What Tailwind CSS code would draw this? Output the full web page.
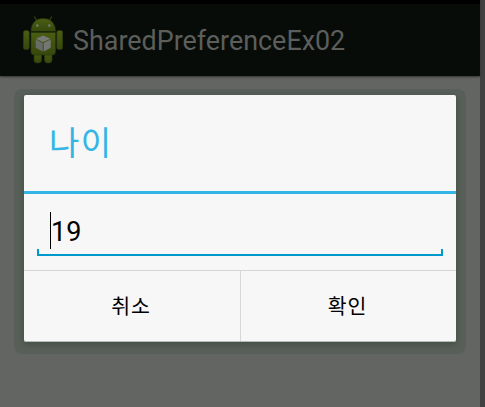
<!DOCTYPE html>
<html lang="ko">

<head>
  <meta charset="UTF-8">
  <title>SharedPreferenceEx02</title>
  <script src="https://cdn.jsdelivr.net/npm/@tailwindcss/browser@4"></script>
</head>

<body class="h-[407px] w-[485px] overflow-hidden bg-[#424242] font-['Roboto','Noto_Sans_CJK_KR',sans-serif]">
  <div class="flex h-full w-[480px] flex-col bg-[#636562]">
    <!-- Action bar -->
    <header class="flex h-[76px] shrink-0 items-center border-t-4 border-black bg-[#070c08] pl-[23px] shadow-[0_1px_2px_#333]">
      <svg class="h-[48px] w-[40px] shrink-0" viewBox="0 0 40 48">
        <defs>
          <linearGradient id="body" x1="0" y1="0" x2="0" y2="1">
            <stop offset="0" stop-color="#4b5e13" />
            <stop offset="1" stop-color="#37480d" />
          </linearGradient>
        </defs>
        <g stroke="#35450e" stroke-width="1.2" stroke-linecap="round">
          <path d="M11.5 1l3 4.500M28.500 1l-3 4.500" />
        </g>
        <g fill="url(#body)" stroke="#2a370b" stroke-width=".6">
          <rect x="11" y="35" width="7.500" height="12" rx="3" />
          <rect x="21.500" y="35" width="7.500" height="12" rx="3" />
          <rect x=".3" y="14.500" width="6" height="19" rx="2" />
          <rect x="33.700" y="14.500" width="6" height="19" rx="2" />
          <path d="M8 15.500h24.500v20q0 3.500-3.500 3.500H11.500Q8 39 8 35.500z" />
          <path d="M8 15.500C8 7 13 2.500 20.200 2.500S32.500 7 32.500 15.500z" />
        </g>
        <path d="M7.800 16h25" stroke="#141c07" stroke-width="1.200" />
        <circle cx="14.300" cy="9.500" r="1.300" fill="#747970" />
        <circle cx="26.300" cy="9.500" r="1.300" fill="#747970" />
        <path d="M20.200 19.500l7.200 3.300-7.200 3.400-7.200-3.400z" fill="#767976" />
        <path d="M12.700 23.600l7 3.300v8.500l-7-3.600z" fill="#696c69" />
        <path d="M27.700 23.600l-7 3.300v8.500l7-3.600z" fill="#747774" />
      </svg>
      <h1 class="ml-[10px] pt-[2px] text-[26.900px] leading-8 text-[#5c5e5c]">SharedPreferenceEx02</h1>
    </header>

    <main class="pt-[13px] pl-[14px]">
      <!-- Dialog with its dark halo -->
      <div class="h-[265px] w-[452px] rounded-lg bg-[#59605a] px-[10px] pt-[6px]">
        <div class="flex h-[247px] flex-col rounded-[2px] border-b border-[#b8bab8] bg-[#f7f7f7] shadow-[0_2px_7px_1px_#465045]">
          <div class="flex h-[99px] shrink-0 items-center border-b-3 border-[#33b5e5] pl-[25px]">
            <h2 class="text-[33px] leading-none tracking-[1.500px] text-[#33b5e5]">나이</h2>
          </div>
          <div class="h-[76px] shrink-0 px-[13px] pt-[18px]">
            <div class="flex h-[37px] items-center pl-[13px]">
              <span class="h-[37px] w-px bg-black"></span>
              <span class="pt-[3px] text-[27px] leading-none text-black">19</span>
            </div>
            <div class="h-[7px] border-x-2 border-b-2 border-[#0099cc]"></div>
          </div>
          <div class="flex flex-1 border-t border-[#d7d7d7] text-[20.500px] tracking-[1px] text-black">
            <button class="w-[217px] border-r border-[#d7d7d7] pt-[2px] pr-[2px]">취소</button>
            <button class="flex-1 pt-[2px] pr-[2px]">확인</button>
          </div>
        </div>
      </div>
    </main>
  </div>
</body>

</html>
